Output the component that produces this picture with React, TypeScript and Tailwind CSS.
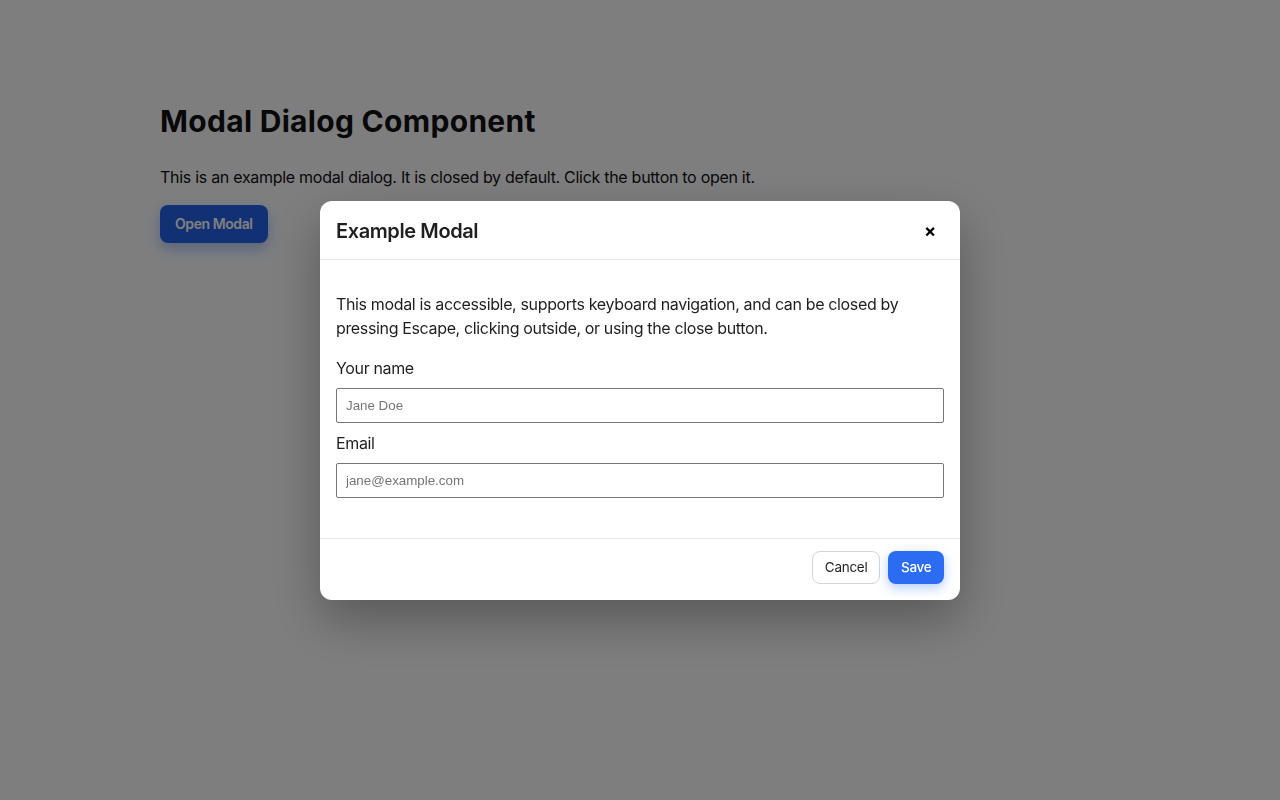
import React from 'react';

const Modal: React.FC = () => {
  return (
    <div className="fixed inset-0 z-50 flex items-center justify-center bg-black/50">
      <div
        role="dialog"
        aria-modal="true"
        aria-labelledby="modal-title"
        className="w-[640px] rounded-xl bg-white shadow-[0_20px_50px_rgba(0,0,0,0.3)]"
      >
        <div className="flex h-[59px] items-center justify-between border-b border-gray-200 pt-[3px] pl-4 pr-[14px]">
          <h2 id="modal-title" className="text-[20px] font-semibold tracking-[-0.02em] text-[#1f1f1f]">
            Example Modal
          </h2>
          <button
            aria-label="Close"
            className="flex h-8 w-8 items-center justify-center rounded-md text-[18px] font-bold leading-none text-black"
          >
            ×
          </button>
        </div>

        <div className="px-4 pt-8 pb-10 tracking-[-0.022em]">
          <p className="text-base leading-6 text-[#1f1f1f]">
            This modal is accessible, supports keyboard navigation, and can be closed by pressing Escape,
            clicking outside, or using the close button.
          </p>
          <label className="mt-4 block text-base leading-6 text-[#1f1f1f]" htmlFor="name">
            Your name
          </label>
          <input
            id="name"
            placeholder="Jane Doe"
            className="mt-2 block h-[35px] w-full rounded-[2px] border border-[#767676] px-[9px] font-['Liberation_Sans',Arial,sans-serif] text-[13.33px] tracking-normal placeholder:text-[#757575]"
          />
          <label className="mt-2 block text-base leading-6 text-[#1f1f1f]" htmlFor="email">
            Email
          </label>
          <input
            id="email"
            type="email"
            placeholder="jane@example.com"
            className="mt-2 block h-[35px] w-full rounded-[2px] border border-[#767676] px-[9px] font-['Liberation_Sans',Arial,sans-serif] text-[13.33px] tracking-normal placeholder:text-[#757575]"
          />
        </div>

        <div className="flex justify-end gap-2 border-t border-gray-200 px-4 pt-3 pb-4">
          <button className="h-[33px] rounded-lg border border-gray-300 bg-white px-3 text-[13.5px] tracking-[-0.02em] text-[#1f1f1f]">
            Cancel
          </button>
          <button className="h-[33px] rounded-lg bg-[#2b6cf3] px-[12.5px] text-[13.5px] font-medium tracking-[-0.02em] text-white shadow-[0_4px_12px_rgba(43,108,243,0.35)]">
            Save
          </button>
        </div>
      </div>
    </div>
  );
};

export default function App() {
  return (
    <div className="min-h-screen bg-[#fcfdff] font-['Inter','Noto_Sans',sans-serif] text-[#111]">
      <div className="mx-auto w-[960px] pt-[101px]">
        <h1 className="text-[30px] font-bold leading-[40px] tracking-[0.01em]">Modal Dialog Component</h1>
        <p className="mt-6 text-base leading-6 tracking-[-0.018em]">
          This is an example modal dialog. It is closed by default. Click the button to open it.
        </p>
        <button className="mt-4 h-[38px] rounded-lg bg-[#2563eb] px-[15px] text-sm font-semibold tracking-[-0.03em] text-white shadow-[0_6px_14px_rgba(37,99,235,0.35)]">
          Open Modal
        </button>
      </div>
      <Modal />
    </div>
  );
}
